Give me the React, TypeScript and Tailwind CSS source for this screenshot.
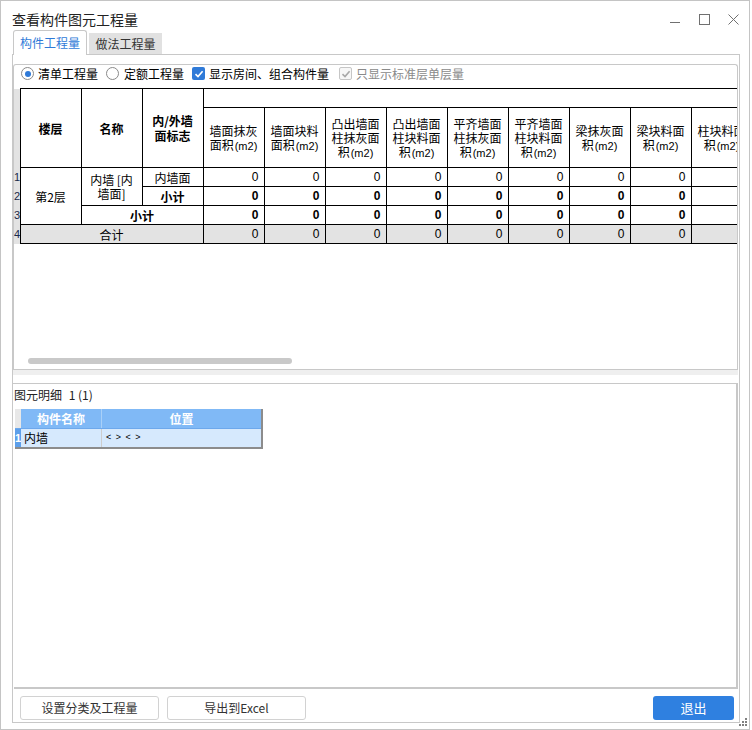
import React from "react";

const DATA_HEADERS: string[][] = [
  ["墙面抹灰", "面积"],
  ["墙面块料", "面积"],
  ["凸出墙面", "柱抹灰面", "积"],
  ["凸出墙面", "柱块料面", "积"],
  ["平齐墙面", "柱抹灰面", "积"],
  ["平齐墙面", "柱块料面", "积"],
  ["梁抹灰面", "积"],
  ["梁块料面", "积"],
  ["柱块料面", "积"],
];

const Radio = ({ checked }: { checked?: boolean }) => (
  <span className="flex h-[13px] w-[13px] items-center justify-center rounded-full border border-[#8a8a8a] bg-white">
    {checked && <span className="h-[6px] w-[6px] rounded-full bg-[#2f7ad8]" />}
  </span>
);

const Check = ({ disabled }: { disabled?: boolean }) => (
  <span
    className={
      disabled
        ? "flex h-[13px] w-[13px] items-center justify-center rounded-[2px] border border-[#c6c6c6] bg-[#f7f7f7]"
        : "flex h-[13px] w-[13px] items-center justify-center rounded-[2px] bg-[#2f7ad8]"
    }
  >
    <svg width="10" height="10" viewBox="0 0 10 10">
      <path d="M1.5 5.2 L4 7.6 L8.6 2.2" fill="none" stroke={disabled ? "#a8a8a8" : "#fff"} strokeWidth="1.6" />
    </svg>
  </span>
);

const Zeros = ({ bold, gray }: { bold?: boolean; gray?: boolean }) => (
  <>
    {DATA_HEADERS.map((_, i) => (
      <td
        key={i}
        className={`border border-black pr-[5px] text-right font-['Liberation_Sans',sans-serif] text-[12px] ${
          bold ? "font-bold" : ""
        } ${gray ? "bg-[#e3e3e3]" : ""}`}
      >
        0
      </td>
    ))}
  </>
);

const Gutter = ({ n }: { n: number }) => (
  <td className="overflow-hidden bg-[#e3e3e3] p-0 text-left font-['Liberation_Sans',sans-serif] text-[11px] leading-none text-[#1a2a4a]">
    {n}
  </td>
);

export default function App() {
  return (
    <div className="h-[730px] w-[752px] bg-white font-['Noto_Sans_CJK_SC','Liberation_Sans',sans-serif] text-black">
      <div className="relative flex h-[730px] w-[750px] flex-col border border-[#c4c4c4]">
        {/* title bar */}
        <div className="flex h-[29px] items-start justify-between">
          <div className="pl-[11px] pt-[8px] text-[14px] leading-[20px] text-[#222]">查看构件图元工程量</div>
          <div className="flex items-start gap-[18px] pr-[10px] pt-[13px]">
            <svg width="11" height="11" viewBox="0 0 11 11">
              <path d="M0 8.5 H10" stroke="#707070" strokeWidth="1" />
            </svg>
            <svg width="11" height="11" viewBox="0 0 11 11">
              <rect x="0.5" y="0.5" width="10" height="10" fill="none" stroke="#707070" strokeWidth="1" />
            </svg>
            <svg width="11" height="11" viewBox="0 0 11 11">
              <path d="M0.5 0.5 L10.5 10.5 M10.5 0.5 L0.5 10.5" stroke="#707070" strokeWidth="1" />
            </svg>
          </div>
        </div>

        {/* tabs */}
        <div className="ml-[12px] flex h-[24px] items-end text-[12px]">
          <div className="relative z-10 -mb-px flex h-[25px] w-[74px] items-center justify-center rounded-t-[3px] border border-b-0 border-[#c8c8c8] bg-white text-[#2f7ad8]">
            构件工程量
          </div>
          <div className="ml-[2px] flex h-[21px] w-[73px] items-center justify-center bg-[#e1e1e1] text-[#333]">
            做法工程量
          </div>
        </div>

        {/* tab panel */}
        <div className="ml-[11px] flex h-[669px] w-[728px] flex-col border border-[#c8c8c8]">
          <div className="h-[9px]" />

          {/* upper box */}
          <div className="mr-[1px] flex h-[305px] flex-col rounded-t-[3px] border-x border-t border-[#c8c8c8]">
            <div className="flex h-[23px] items-start pt-[1px] text-[12px] leading-[15px]">
              <div className="ml-[7px] flex items-center gap-[4px]">
                <Radio checked />
                <span>清单工程量</span>
              </div>
              <div className="ml-[8px] flex items-center gap-[5px]">
                <Radio />
                <span>定额工程量</span>
              </div>
              <div className="ml-[8px] flex items-center gap-[4px]">
                <Check />
                <span>显示房间、组合构件量</span>
              </div>
              <div className="ml-[10px] flex items-center gap-[4px]">
                <Check disabled />
                <span className="text-[#8a8a8a]">只显示标准层单层量</span>
              </div>
            </div>

            <div className="flex h-[281px] flex-col">
              <div className="overflow-hidden">
                <table className="w-[738px] table-fixed border-collapse text-[12px] leading-[13px]">
                  <colgroup>
                    <col className="w-[6px]" />
                    {Array.from({ length: 12 }).map((_, i) => (
                      <col key={i} className="w-[61px]" />
                    ))}
                  </colgroup>
                  <thead>
                    <tr className="h-[19px]">
                      <th rowSpan={2} className="bg-[#e3e3e3] p-0" />
                      <th rowSpan={2} className="border border-black font-bold">楼层</th>
                      <th rowSpan={2} className="border border-black font-bold">名称</th>
                      <th rowSpan={2} className="border border-black font-bold leading-[15px]">
                        内/外墙
                        <br />
                        面标志
                      </th>
                      <th colSpan={9} className="border border-black" />
                    </tr>
                    <tr className="h-[60px]">
                      {DATA_HEADERS.map((lines, i) => (
                        <th key={i} className="overflow-hidden whitespace-nowrap border border-black px-0 font-normal">
                          {lines.map((l, j) => (
                            <div key={j} className="h-[14px] leading-[14px]">
                              {l}
                              {j === lines.length - 1 && (
                                <span className="ml-[1px] font-['Liberation_Sans',sans-serif] text-[11px]">(m2)</span>
                              )}
                            </div>
                          ))}
                        </th>
                      ))}
                    </tr>
                  </thead>
                  <tbody>
                    <tr className="h-[19px]">
                      <Gutter n={1} />
                      <td rowSpan={3} className="border border-black text-center">第2层</td>
                      <td rowSpan={2} className="border border-black text-center leading-[14px]">
                        内墙 [内
                        <br />
                        墙面]
                      </td>
                      <td className="border border-black text-center">内墙面</td>
                      <Zeros />
                    </tr>
                    <tr className="h-[19px]">
                      <Gutter n={2} />
                      <td className="border border-black text-center font-bold">小计</td>
                      <Zeros bold />
                    </tr>
                    <tr className="h-[19px]">
                      <Gutter n={3} />
                      <td colSpan={2} className="border border-black text-center font-bold">小计</td>
                      <Zeros bold />
                    </tr>
                    <tr className="h-[19px]">
                      <Gutter n={4} />
                      <td colSpan={3} className="border border-black bg-[#e3e3e3] text-center">合计</td>
                      <Zeros gray />
                    </tr>
                  </tbody>
                </table>
              </div>
              <div className="flex-1" />
              <div className="mb-[5px] ml-[14px] h-[6px] w-[264px] rounded-full bg-[#c9c9c9]" />
            </div>
          </div>

          {/* splitter */}
          <div className="mr-[1px] flex h-[15px] flex-col border-y border-[#c8c8c8]">
            <div className="h-[5px] bg-[#efefef]" />
          </div>

          {/* lower box */}
          <div className="ml-[1px] mr-[1px] flex h-[305px] flex-col border-b-2 border-r-2 border-[#c8c8c8]">
            <div className="h-[21px] text-[12px] leading-[21px] text-[#222]">
              图元明细 <span className="ml-[4px]">1 (1)</span>
            </div>
            <div className="ml-[1px] mt-[4px] w-[248px] border-b-2 border-r-2 border-[#8c8c8c]">
              <div className="flex h-[20px] border-b border-[#6da8ec]">
                <div className="w-[6px] bg-[#e8e8e8]" />
                <div className="flex w-[81px] items-center justify-center border-r border-[#a9d0f8] bg-[#80b9f6] text-[12px] font-bold text-white">
                  构件名称
                </div>
                <div className="flex flex-1 items-center justify-center bg-[#80b9f6] text-[12px] font-bold text-white">
                  位置
                </div>
              </div>
              <div className="flex h-[18px]">
                <div className="flex w-[6px] items-center overflow-hidden bg-[#5d9fea] font-['Liberation_Sans',sans-serif] text-[11px] font-bold text-white">
                  1
                </div>
                <div className="flex w-[81px] items-center border-r border-[#cdcdcd] bg-[#d6e9fd] pl-[3px] text-[12px]">
                  内墙
                </div>
                <div className="flex flex-1 items-center bg-[#d6e9fd] pl-[4px] font-['Liberation_Sans',sans-serif] text-[9px] tracking-[1px]">
                  {"< > < >"}
                </div>
              </div>
            </div>
          </div>

          {/* buttons */}
          <div className="flex h-[33px] items-start justify-between pt-[7px] text-[12px]">
            <div className="ml-[7px] flex gap-[8px]">
              <button className="h-[24px] w-[139px] rounded-[3px] border border-[#d2d2d2] bg-white text-[#333]">
                设置分类及工程量
              </button>
              <button className="h-[24px] w-[139px] rounded-[3px] border border-[#d2d2d2] bg-white text-[#333]">
                导出到Excel
              </button>
            </div>
            <button className="mr-[5px] h-[24px] w-[81px] rounded-[3px] bg-[#2f80e0] text-[13px] text-white">
              退出
            </button>
          </div>
        </div>

        {/* resize grip */}
        <svg className="absolute bottom-[2px] right-[1px]" width="9" height="9" viewBox="0 0 9 9">
          <rect x="6" y="0" width="2" height="2" fill="#808080" />
          <rect x="3" y="3" width="2" height="2" fill="#808080" />
          <rect x="6" y="3" width="2" height="2" fill="#808080" />
          <rect x="0" y="6" width="2" height="2" fill="#808080" />
          <rect x="3" y="6" width="2" height="2" fill="#808080" />
          <rect x="6" y="6" width="2" height="2" fill="#808080" />
        </svg>
      </div>
    </div>
  );
}
